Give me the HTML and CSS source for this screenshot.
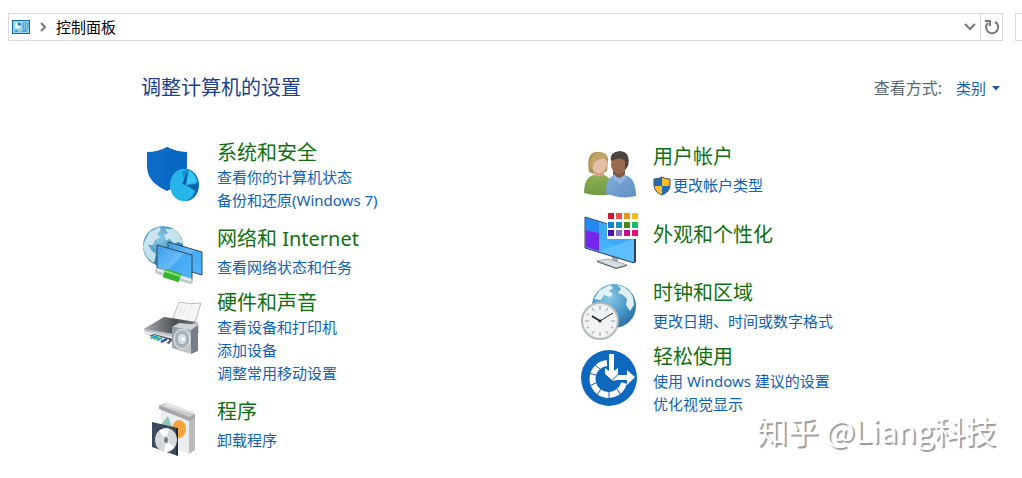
FILE: index.html
```
<!DOCTYPE html>
<html lang="zh-CN">
    <head>
        <title>控制面板</title>
        <meta charset="utf-8">
        <meta name="viewport" content="width=device-width, initial-scale=1">
        <link rel="stylesheet" href="styles.css">
    </head>
    <body>
        <header class="toolbar">
            <nav class="address">
                <svg class="address-icon" viewBox="0 0 18 14">
                    <rect x="0.5" y="0.5" width="17" height="13" fill="#8fd6f6" stroke="#176a9c"/>
                    <circle cx="6" cy="5.5" r="3" fill="#e9f9ff"/>
                    <path d="M6 5.500V2.500A3 3 0 0 1 9 5.500Z" fill="#1d6fa5"/>
                    <path d="M11 3h5v6h-5zM11 5h5M11 7h5M13.500 3v6" fill="#d6f2ff" stroke="#2d86ba" stroke-width="0.8"/>
                    <path d="M3 11h3M10 11h5" stroke="#176a9c"/>
                    <path d="M6 11h3" stroke="#d9b44a"/>
                </svg>
                <svg class="address-arrow" viewBox="0 0 6 10"><path d="M1 1L5 5L1 9" fill="none" stroke="#777" stroke-width="2"/></svg>
                <a class="address-path" href="#">控制面板</a>
                <button class="tool" type="button" aria-label="以前的位置">
                    <svg width="12" height="8" viewBox="0 0 12 8"><path d="M1 1L6 6L11 1" fill="none" stroke="#777" stroke-width="2"/></svg>
                </button>
                <button class="tool refresh" type="button" aria-label="刷新">
                    <svg width="16" height="16" viewBox="0 0 16 16">
                        <path d="M11 3A6 6 0 1 1 4 4" fill="none" stroke="#777" stroke-width="2"/>
                        <path d="M1 2H6V7" fill="none" stroke="#777" stroke-width="2"/>
                    </svg>
                </button>
            </nav>
            <input class="search" type="search" aria-label="搜索控制面板">
        </header>

        <main>
            <div class="heading">
                <h1>调整计算机的设置</h1>
                <span class="view-label" id="view-label">查看方式:</span>
                <button class="view" type="button" aria-describedby="view-label">类别
                    <svg width="8" height="5" viewBox="0 0 8 5"><path d="M0 0H8L4 4.500Z" fill="#0f5fae"/></svg>
                </button>
            </div>

            <div class="columns">
                <div class="column">
                    <section class="category">
                        <svg class="icon" viewBox="0 0 64 60">
                            <path d="M7 11Q18 11 27 6Q36 11 47 11V25C47 38 38 45 27 50C16 45 7 38 7 25Z" fill="#0b6bc7"/>
                            <path d="M27 6Q36 11 47 11V25L27 50Z" fill="#0968c3"/>
                            <ellipse cx="46" cy="44" rx="13" ry="16" fill="#1272ac"/>
                            <ellipse cx="43" cy="44" rx="13" ry="16" fill="#27b5e9"/>
                            <path d="M46 44L42 31L48 28Q56 31 58 41Z" fill="#1b8fd0"/>
                            <path d="M46 44L49 29Q55 33 57 41Z" fill="#38c7f5"/>
                            <path d="M46 44L42 43L48 30ZM46 44L58 43L57 51Z" fill="#0b5fa8"/>
                        </svg>
                        <div class="text">
                            <h2><a href="#">系统和安全</a></h2>
                            <a class="task" href="#">查看你的计算机状态</a>
                            <a class="task" href="#">备份和还原(Windows 7)</a>
                        </div>
                    </section>

                    <section class="category single">
                        <svg class="icon" viewBox="0 0 64 60">
                            <defs>
                                <radialGradient id="globe" cx="0.4" cy="0.3" r="0.75">
                                    <stop offset="0" stop-color="#8cc9e6"/>
                                    <stop offset="0.6" stop-color="#4295c5"/>
                                    <stop offset="1" stop-color="#276d9f"/>
                                </radialGradient>
                                <linearGradient id="screen" x1="0" y1="0" x2="1" y2="1">
                                    <stop offset="0" stop-color="#3d9ce8"/>
                                    <stop offset="0.5" stop-color="#67bcf8"/>
                                    <stop offset="0.52" stop-color="#46a8f2"/>
                                    <stop offset="1" stop-color="#55b6fb"/>
                                </linearGradient>
                            </defs>
                            <circle cx="23" cy="19" r="20" fill="url(#globe)"/>
                            <path d="M5 13L10 5L19 0L21 3L17 7L20 10L15 13L13 18L8 18L12 24L16 27L14 36Q5 31 3 20ZM25 2L34 2Q41 8 43 17L38 15L34 17L30 12L26 13L24 8L28 6Z" fill="#dceef4" opacity="0.85"/>
                            <path d="M28 15L62 25V48L28 38Z" fill="url(#screen)" stroke="#334a5b"/>
                            <path d="M17 18L52 28V53L17 41Z" fill="url(#screen)" stroke="#334a5b"/>
                            <path d="M18 44L50 54" stroke="#bfc9cc" stroke-width="6" stroke-linecap="round"/>
                            <path d="M18 43L50 53" stroke="#eef3f3" stroke-width="2" stroke-linecap="round"/>
                            <path d="M24 46L40 51" stroke="#35b52f" stroke-width="9"/>
                            <path d="M25 44L40 49" stroke="#87df71" stroke-width="2"/>
                        </svg>
                        <div class="text">
                            <h2><a href="#">网络和 Internet</a></h2>
                            <a class="task" href="#">查看网络状态和任务</a>
                        </div>
                    </section>

                    <section class="category">
                        <svg class="icon" viewBox="0 0 64 60">
                            <defs>
                                <linearGradient id="lid" x1="0" y1="0" x2="1" y2="0">
                                    <stop offset="0" stop-color="#a8aaac"/>
                                    <stop offset="0.6" stop-color="#4c4f52"/>
                                    <stop offset="1" stop-color="#77797c"/>
                                </linearGradient>
                                <linearGradient id="metal" x1="0" y1="0" x2="1" y2="1">
                                    <stop offset="0" stop-color="#8f969c"/>
                                    <stop offset="1" stop-color="#c7cdd1"/>
                                </linearGradient>
                            </defs>
                            <path d="M33 27L39 11Q50 14 61 12L54 34Z" fill="#f4f6f7" stroke="#b9bdc0"/>
                            <path d="M38 24L42 14M42 25L46 15M47 27L51 15" stroke="#e2e6e8"/>
                            <path d="M4 38L24 26L58 31L59 42L34 52L5 43Z" fill="#bfc3c6"/>
                            <path d="M4 38L24 26L56 31L34 43Z" fill="url(#lid)"/>
                            <path d="M4 40L33 46V50L5 43Z" fill="#e5e7e8"/>
                            <path d="M9 45L14 43L33 48L29 53Z" fill="#4e5356"/>
                            <path d="M7 47L15 44L30 49L24 54Z" fill="#e9f5fb"/>
                            <path d="M11 47L17 45M17 49L22 47" stroke="#259bdb" stroke-width="2"/>
                            <path d="M14 48L19 46" stroke="#4ab35b" stroke-width="2"/>
                            <path d="M21 51L27 48" stroke="#244d93" stroke-width="2"/>
                            <path d="M32 36L39 32L58 34L51 39Z" fill="#cfd4d7"/>
                            <path d="M32 36L51 39V63L32 57Z" fill="url(#metal)"/>
                            <path d="M51 39L58 34V60L51 63Z" fill="#767f88"/>
                            <ellipse cx="42" cy="48" rx="8" ry="10" fill="#aeb9c0" stroke="#e9edef"/>
                            <ellipse cx="42" cy="48" rx="5" ry="6" fill="#d4dce0" stroke="#8d989f"/>
                            <circle cx="43" cy="48" r="2" fill="#f8fafa"/>
                        </svg>
                        <div class="text">
                            <h2><a href="#">硬件和声音</a></h2>
                            <a class="task" href="#">查看设备和打印机</a>
                            <a class="task" href="#">添加设备</a>
                            <a class="task" href="#">调整常用移动设置</a>
                        </div>
                    </section>

                    <section class="category single">
                        <svg class="icon" viewBox="0 4 64 60">
                            <path d="M21 12L49 22V58L21 48Z" fill="#ecedee"/>
                            <path d="M49 22L55 19V54L49 58Z" fill="#b9bbbd"/>
                            <path d="M19 9L25 7L55 18L49 22Z" fill="#c9cbcd"/>
                            <path d="M19 9L49 21L55 18V22L49 25L19 13Z" fill="#a4a6a9"/>
                            <path d="M25 10L26 6L54 16V18Z" fill="#e4e5e6"/>
                            <path d="M19 31L28 20L32 32Z" fill="#8fc5b5"/>
                            <ellipse cx="39" cy="33" rx="7" ry="9" fill="#f3a23c"/>
                            <path d="M12 26L38 32V60L12 51Z" fill="#3b4a5c"/>
                            <path d="M36 32L38 32V60L36 59Z" fill="#222d3a"/>
                            <ellipse cx="26" cy="44" rx="11" ry="12" fill="#d5d8da"/>
                            <path d="M26 44L19 35Q24 31 29 33ZM26 44L34 51Q30 57 24 56Z" fill="#fbfcfc"/>
                            <ellipse cx="26" cy="44" rx="3" ry="4" fill="#8c959b" stroke="#f3f4f4"/>
                            <circle cx="26" cy="44" r="1" fill="#4b5661"/>
                        </svg>
                        <div class="text">
                            <h2><a href="#">程序</a></h2>
                            <a class="task" href="#">卸载程序</a>
                        </div>
                    </section>
                </div>

                <div class="column column-right">
                    <section class="category single">
                        <svg class="icon" viewBox="0 3 64 60">
                            <defs>
                                <linearGradient id="green" x1="0" y1="0" x2="0" y2="1">
                                    <stop offset="0" stop-color="#8fae54"/>
                                    <stop offset="1" stop-color="#6e9b43"/>
                                </linearGradient>
                                <linearGradient id="blue" x1="0" y1="0" x2="1" y2="1">
                                    <stop offset="0" stop-color="#83add9"/>
                                    <stop offset="1" stop-color="#5f8fc4"/>
                                </linearGradient>
                            </defs>
                            <path d="M13 30Q10 11 20 10Q31 9 32 17L31 29Q22 35 13 30Z" fill="#ad9256"/>
                            <path d="M18 25H28V36H18Z" fill="#d5a487"/>
                            <ellipse cx="23" cy="22" rx="8" ry="9" fill="#e6bea5"/>
                            <path d="M14 24Q13 12 23 10Q29 10 31 16Q22 17 18 20L16 28Z" fill="#bda366"/>
                            <path d="M8 51Q8 36 17 33Q23 36 28 33Q36 35 36 52Q21 55 8 51Z" fill="url(#green)"/>
                            <path d="M37 26H49V38H37Z" fill="#81583f"/>
                            <ellipse cx="43" cy="22" rx="8" ry="10" fill="#9a6b4b"/>
                            <path d="M35 19Q33 10 44 9Q55 10 52 24L49 28L49 19Q44 14 35 19Z" fill="#4a4540"/>
                            <path d="M30 51Q29 37 38 33Q43 38 49 33Q60 36 60 54Q44 58 30 51Z" fill="url(#blue)"/>
                            <path d="M38 32L43 38L49 32L50 36L44 42L37 36Z" fill="#93b8e0"/>
                        </svg>
                        <div class="text">
                            <h2><a href="#">用户帐户</a></h2>
                            <a class="task shielded" href="#"><svg class="shield" viewBox="0 0 18 20">
                                <path d="M1 3Q6 3 9 1V10H1Z" fill="#1d6bba"/>
                                <path d="M9 1Q12 3 17 3V10H9Z" fill="#fbbd21"/>
                                <path d="M1 10H9V19Q2 16 1 10Z" fill="#fbbd21"/>
                                <path d="M9 10H17Q16 16 9 19Z" fill="#1d6bba"/>
                                <path d="M1 3Q6 3 9 1Q12 3 17 3V9Q17 16 9 19Q1 16 1 9Z" fill="none" stroke="#3c5064"/>
                            </svg>更改帐户类型</a>
                        </div>
                    </section>

                    <section class="category untasked">
                        <svg class="icon" viewBox="0 0 64 60">
                            <path d="M36 44L42 46V52L36 51Z" fill="#9ea9b3"/>
                            <path d="M21 50L32 48L51 54L40 57Z" fill="#d9dee3" stroke="#a2abb3"/>
                            <path d="M21 50L40 57L51 54V55L40 58L21 51Z" fill="#4f5961"/>
                            <path d="M9 6L58 21V52L9 37Z" fill="#46b1fb" stroke="#33404d"/>
                            <path d="M23 11L58 21V41L23 28Z" fill="#3fa8f8"/>
                            <path d="M23 40L58 28V51Z" fill="#5cbefd"/>
                            <path d="M10 19L23 22V40L10 36Z" fill="#7427e8"/>
                            <path d="M10 7L23 11V22L10 19Z" fill="#2389ef"/>
                            <path d="M58 21L60 21V51L58 52Z" fill="#334350"/>
                            <path d="M31 1H64V28H31Z" fill="#fff"/>
                            <path d="M32 2h6v6h-6z" fill="#d41132"/>
                            <path d="M40 2h6v6h-6z" fill="#f2504f"/>
                            <path d="M48 2h6v6h-6z" fill="#f1930c"/>
                            <path d="M56 2h6v6h-6z" fill="#fbb914"/>
                            <path d="M32 11h6v6h-6z" fill="#127bd0"/>
                            <path d="M40 11h6v6h-6z" fill="#1496ba"/>
                            <path d="M48 11h6v6h-6z" fill="#4b8710"/>
                            <path d="M56 11h6v6h-6z" fill="#10bd73"/>
                            <path d="M32 19h6v6h-6z" fill="#4c139e"/>
                            <path d="M40 19h6v6h-6z" fill="#9270bb"/>
                            <path d="M48 19h6v6h-6z" fill="#c70f83"/>
                            <path d="M56 19h6v6h-6z" fill="#e60e76"/>
                        </svg>
                        <div class="text">
                            <h2><a href="#">外观和个性化</a></h2>
                        </div>
                    </section>

                    <section class="category single">
                        <svg class="icon" viewBox="0 0 64 60">
                            <circle cx="38" cy="25" r="22" fill="url(#globe)"/>
                            <path d="M18 18L24 9L34 4L37 7L33 10L37 13L34 16L28 14L25 19ZM41 4L48 6L54 11L57 16L58 24L54 30L50 24L51 18L47 14L42 12L45 8Z" fill="#e2f1f5"/>
                            <circle cx="24" cy="40" r="18" fill="#eceff0" stroke="#b4babd" stroke-width="2"/>
                            <circle cx="24" cy="40" r="16" fill="#f1f3f4"/>
                            <path d="M24 25V29M24 51V55M9 40H13M35 40H39M16 27L18 30M32 27L30 30M11 33L13 34M11 47L13 46M16 53L18 50M32 53L30 50M37 47L35 46" stroke="#949a9e"/>
                            <path d="M24 40L37 32" stroke="#262b30" stroke-width="1"/>
                            <path d="M24 40L16 35" stroke="#262b30" stroke-width="2"/>
                            <circle cx="24" cy="40" r="1.500" fill="#262b30"/>
                        </svg>
                        <div class="text">
                            <h2><a href="#">时钟和区域</a></h2>
                            <a class="task" href="#">更改日期、时间或数字格式</a>
                        </div>
                    </section>

                    <section class="category">
                        <svg class="icon" viewBox="0 0 64 60">
                            <circle cx="33" cy="33" r="28" fill="#0e69be"/>
                            <path d="M31 18A16 16 0 1 0 48 38" fill="none" stroke="#fff" stroke-width="6"/>
                            <path d="M24 24L19 20M20 30L13 28M20 38L13 41M25 44L21 50M33 46V54M41 44L45 50" stroke="#0e69be"/>
                            <path d="M33 9H38V26L42 23V29L36 35L29 29V23L33 26Z" fill="#fff"/>
                            <path d="M36 36L42 30H51V25L59 32L51 40V35H42Z" fill="#fff"/>
                        </svg>
                        <div class="text">
                            <h2><a href="#">轻松使用</a></h2>
                            <a class="task" href="#">使用 Windows 建议的设置</a>
                            <a class="task" href="#">优化视觉显示</a>
                        </div>
                    </section>
                </div>
            </div>
        </main>
        <div class="watermark">知乎 @Liang科技</div>
    </body>
</html>
```
FILE: styles.css
```
* {
  box-sizing: border-box;
}

body {
  margin: 0;
  position: relative;
  min-height: 100vh;
  overflow: hidden;
  background: #fff;
  color: #000;
  font-family: "Noto Sans", "Noto Sans CJK SC", sans-serif;
  font-size: 15px;
}

h1, h2 {
  margin: 0;
  font-size: 20px;
  font-weight: normal;
  line-height: 24px;
}

a {
  text-decoration: none;
}

a:hover {
  text-decoration: underline;
}

button {
  padding: 0;
  border: none;
  background: none;
  font: inherit;
}

.toolbar {
  display: flex;
  gap: 12px;
  padding: 13px 0 0 8px;
}

.address {
  flex: 1;
  display: flex;
  align-items: center;
  height: 28px;
  border: 1px solid #d9d9d9;
}

.address-icon {
  width: 18px;
  height: 14px;
  margin-left: 3px;
}

.address-arrow {
  width: 6px;
  height: 10px;
  margin: 0 10px;
}

.address-path {
  flex: 1;
  color: #000;
  line-height: 24px;
}

.tool {
  display: flex;
  align-items: center;
  justify-content: center;
  width: 20px;
  height: 26px;
}

.refresh {
  width: 22px;
  border-left: 1px solid #d9d9d9;
}

.search {
  width: 7px;
  height: 28px;
  padding: 0;
  border: 1px solid #d9d9d9;
  border-right: none;
  border-radius: 0;
  appearance: none;
}

.heading {
  display: flex;
  align-items: center;
  padding: 35px 22px 0 141px;
}

.heading h1 {
  flex: 1;
  color: #1c3f8c;
}

.view-label {
  margin-right: 14px;
  color: #5a6872;
  font-size: 16px;
  line-height: 24px;
}

.view {
  display: flex;
  align-items: center;
  gap: 6px;
  color: #0f62b4;
  line-height: 20px;
}

.columns {
  display: grid;
  grid-template-columns: 1fr 1fr;
  padding: 41px 10px 0 140px;
}

.column-right {
  padding-top: 4px;
}

.category {
  display: flex;
  gap: 13px;
  margin-bottom: 15px;
}

.icon {
  flex: none;
  width: 64px;
  height: 60px;
  overflow: visible;
}

.category h2 {
  margin-bottom: 1px;
}

.category h2 a {
  color: #107010;
}

.task {
  display: block;
  color: #0f62b4;
  line-height: 23px;
}

/* one task only: a little air under the title */
.single {
  margin-bottom: 4px;
}

.single h2 {
  margin-bottom: 5px;
}

.untasked {
  margin: 6px 0 10px;
}

.untasked .text {
  padding-top: 12px;
}

.shielded {
  display: flex;
  align-items: center;
  gap: 2px;
}

.shield {
  width: 18px;
  height: 20px;
}

.watermark {
  position: absolute;
  right: 26px;
  bottom: 27px;
  color: #fff;
  font-family: "Noto Sans CJK SC", sans-serif;
  font-size: 31px;
  line-height: 42px;
  text-shadow: 2px 2px 1px #999;
}
```
